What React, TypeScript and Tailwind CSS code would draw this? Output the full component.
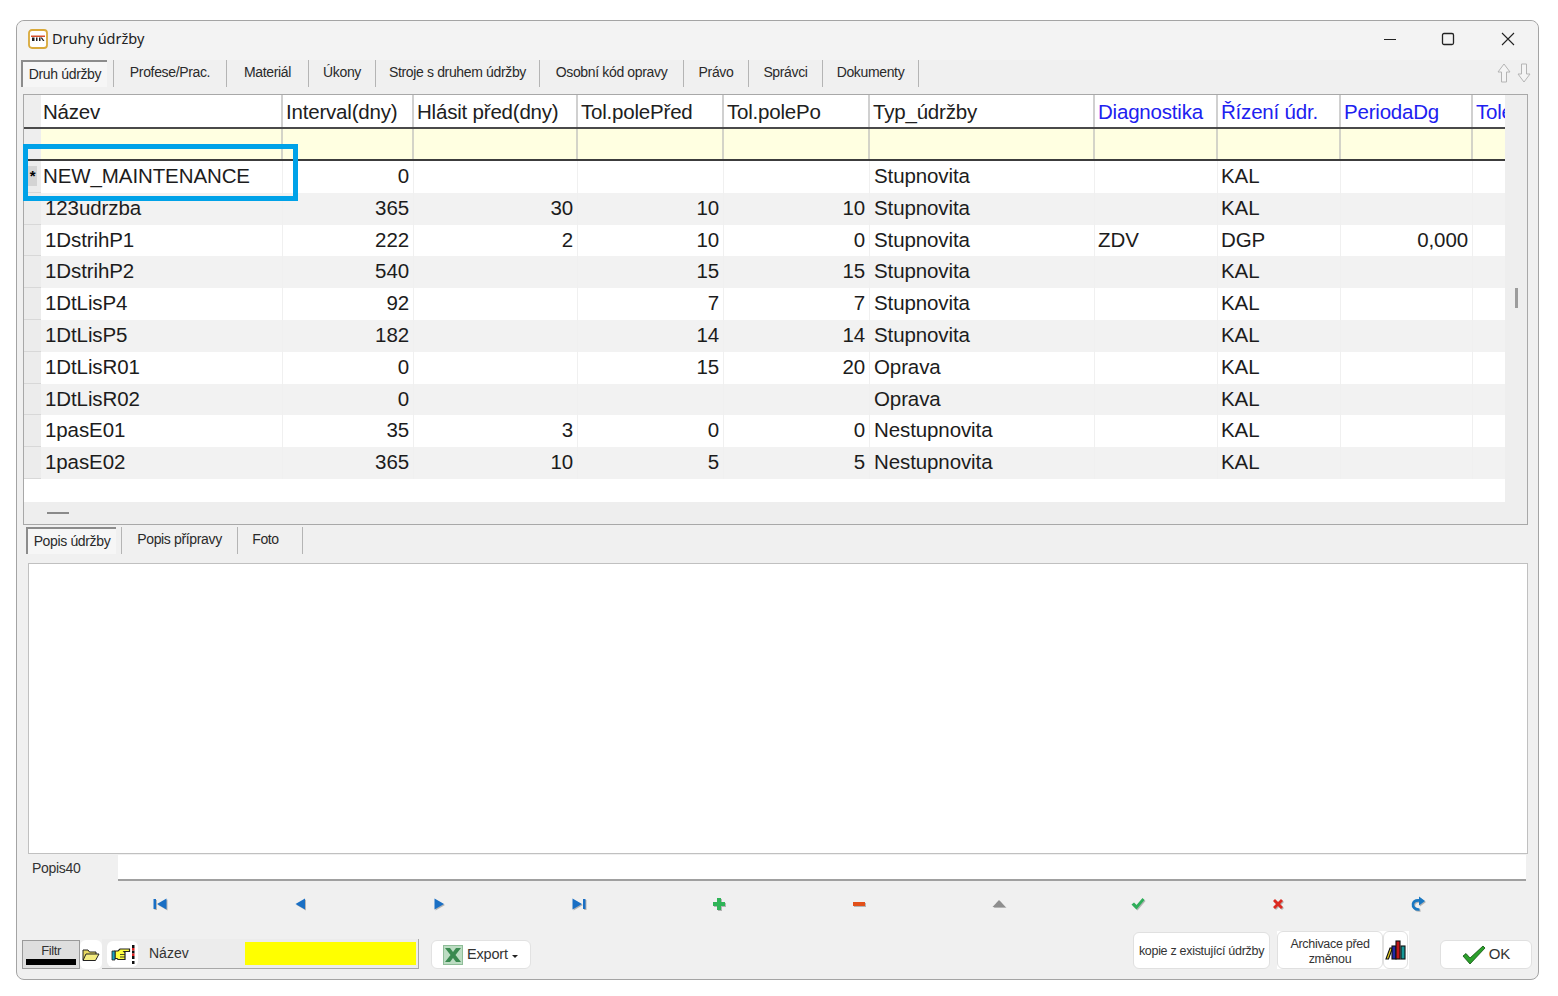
import type { ReactNode } from 'react';

const gridCols = 'grid grid-cols-[17px_242px_131px_164px_146px_146px_225px_123px_123px_132px_32px]';

const topTabs = [
  { label: 'Profese/Prac.', width: 'w-[113px]' },
  { label: 'Materiál', width: 'w-[82px]' },
  { label: 'Úkony', width: 'w-[67px]' },
  { label: 'Stroje s druhem údržby', width: 'w-[164px]' },
  { label: 'Osobní kód opravy', width: 'w-[144px]' },
  { label: 'Právo', width: 'w-[65px]' },
  { label: 'Správci', width: 'w-[74px]' },
  { label: 'Dokumenty', width: 'w-[96px]' },
];

const headers = [
  { label: 'Název', blue: false },
  { label: 'Interval(dny)', blue: false },
  { label: 'Hlásit před(dny)', blue: false },
  { label: 'Tol.polePřed', blue: false },
  { label: 'Tol.polePo', blue: false },
  { label: 'Typ_údržby', blue: false },
  { label: 'Diagnostika', blue: true },
  { label: 'Řízení údr.', blue: true },
  { label: 'PeriodaDg', blue: true },
  { label: 'Tolerance', blue: true },
];

const rows = [
  ['NEW_MAINTENANCE', '0', '', '', '', 'Stupnovita', '', 'KAL', ''],
  ['123udrzba', '365', '30', '10', '10', 'Stupnovita', '', 'KAL', ''],
  ['1DstrihP1', '222', '2', '10', '0', 'Stupnovita', 'ZDV', 'DGP', '0,000'],
  ['1DstrihP2', '540', '', '15', '15', 'Stupnovita', '', 'KAL', ''],
  ['1DtLisP4', '92', '', '7', '7', 'Stupnovita', '', 'KAL', ''],
  ['1DtLisP5', '182', '', '14', '14', 'Stupnovita', '', 'KAL', ''],
  ['1DtLisR01', '0', '', '15', '20', 'Oprava', '', 'KAL', ''],
  ['1DtLisR02', '0', '', '', '', 'Oprava', '', 'KAL', ''],
  ['1pasE01', '35', '3', '0', '0', 'Nestupnovita', '', 'KAL', ''],
  ['1pasE02', '365', '10', '5', '5', 'Nestupnovita', '', 'KAL', ''],
];

function Icon({ children, className = 'h-4 w-4 drop-shadow-[1px_1px_0.5px_rgba(0,0,0,0.25)]' }: { children: ReactNode; className?: string }) {
  return (
    <svg viewBox="0 0 16 16" className={className}>
      {children}
    </svg>
  );
}

const navIcons = [
  <Icon key="first"><path d="M1.500 3h2.500v10H1.500zM14.500 2.500v11L5 8z" fill="#1a6fc4" /></Icon>,
  <Icon key="prev"><path d="M13 2.500v11L3.500 8z" fill="#1a6fc4" /></Icon>,
  <Icon key="next"><path d="M3.500 2.500v11L13 8z" fill="#1a6fc4" /></Icon>,
  <Icon key="last"><path d="M1.500 2.500v11L11 8zM12 3h2.500v10H12z" fill="#1a6fc4" /></Icon>,
  <Icon key="add"><path d="M6 2h4v4h4v4h-4v4H6v-4H2V6h4z" fill="#2fb457" /></Icon>,
  <Icon key="del"><path d="M2 6h12v4H2z" fill="#e2501a" /></Icon>,
  <Icon key="edit"><path d="M8 4l6.500 7h-13z" fill="#8e8e8e" /></Icon>,
  <Icon key="post"><path d="M1.500 8.500l2.500-2 2.500 2.500L12.500 2l2 2-8 9.500z" fill="#2fae5a" /></Icon>,
  <Icon key="cancel"><path d="M3 5l2-2 3 3 3-3 2 2-3 3 3 3-2 2-3-3-3 3-2-2 3-3z" fill="#dc2a20" /></Icon>,
  <Icon key="refresh">
    <path d="M9.500 13.500C5 14 2.500 11 3 8C3.500 5 6 4 10 4.500" fill="none" stroke="#1a78c2" strokeWidth="2.600" />
    <path d="M9 0.500L15 5 9 9.500z" fill="#1a78c2" />
  </Icon>,
];

function Tab({ label, width, className = '' }: { label: string; width: string; className?: string }) {
  return (
    <div className={`flex h-full items-center justify-center border-r border-[#b4b4b4] pb-[2px] ${width} ${className}`}>
      <span className="tracking-[-0.35px]">{label}</span>
    </div>
  );
}

function ActiveTab({ label, width }: { label: string; width: string }) {
  return (
    <div className={`flex items-center justify-center border-t-2 border-l-2 border-[#8c8c8c] bg-[#f6f6f6] ${width}`}>
      <span className="tracking-[-0.35px]">{label}</span>
    </div>
  );
}

function GridHeader() {
  return (
    <>
      <div className={`${gridCols} h-[34px] border-b-2 border-[#4a4a4a]`}>
        <div className="bg-[#eeeeee]" />
        {headers.map((h, i) => (
          <div
            key={h.label}
            className={`overflow-hidden whitespace-nowrap border-r-2 border-[#d0d0d0] bg-white pt-[2px] leading-[30px] tracking-[-0.2px] last:border-r-0 ${
              h.blue ? 'text-[#2020f0]' : 'text-[#202020]'
            } ${i === 0 ? 'pl-[2px]' : 'pl-[3px]'}`}
          >
            {h.label}
          </div>
        ))}
      </div>
      <div className={`${gridCols} h-[32px] border-b-2 border-[#3c3c3c]`}>
        <div className="bg-[#eeeeee]" />
        {headers.map((h) => (
          <div key={h.label} className="border-r-2 border-[#d4d4c8] bg-[#ffffe1] last:border-r-0" />
        ))}
      </div>
    </>
  );
}

function GridRow({ row, index }: { row: string[]; index: number }) {
  const bg = index % 2 === 0 ? 'bg-white' : 'bg-[#f2f2f2]';
  const cell = `h-[31.800px] whitespace-nowrap border-r border-[#f0f0f0] leading-[30px] text-[#1c1c1c] ${bg}`;
  return (
    <div className={gridCols}>
      <div className="flex h-[31.800px] items-center justify-center border-b border-[#d8d8d8] bg-[#ececec]">
        {index === 0 && <span className="bg-[#d4d4d4] px-[2px] text-[15px] font-bold leading-[20px] text-black">*</span>}
      </div>
      <div className={`${cell} ${index === 0 ? 'pl-[2px]' : 'pl-[4px]'}`}>{row[0]}</div>
      <div className={`${cell} pr-[4px] text-right`}>{row[1]}</div>
      <div className={`${cell} pr-[4px] text-right`}>{row[2]}</div>
      <div className={`${cell} pr-[4px] text-right`}>{row[3]}</div>
      <div className={`${cell} pr-[4px] text-right`}>{row[4]}</div>
      <div className={`${cell} pl-[4px]`}>{row[5]}</div>
      <div className={`${cell} pl-[3px]`}>{row[6]}</div>
      <div className={`${cell} pl-[3px]`}>{row[7]}</div>
      <div className={`${cell} pr-[4px] text-right`}>{row[8]}</div>
      <div className={`${cell} border-r-0`} />
    </div>
  );
}

function AppLogo() {
  return (
    <svg viewBox="0 0 20 20" className="h-5 w-5">
      <rect x="1" y="1" width="18" height="18" rx="3" fill="#fff" stroke="#d9a93a" strokeWidth="1.800" />
      <path d="M3 6.500h14v1.500H3z" fill="#d9502a" />
      <path d="M4 8.500h2.500v3.500H4zM8 8.500h1.500v3.500H8zM11 8.500h1.500v3.500H11zM14 8.500l2.500 3.500H15l-2.500-3.500z" fill="#222" />
    </svg>
  );
}

function SortArrows() {
  return (
    <div className="flex items-center gap-[6px] pt-[3px]">
      <svg viewBox="0 0 14 20" className="h-5 w-[14px]">
        <path d="M7 1l6 8H9.500v10h-5V9H1z" fill="#f4f4f4" stroke="#b4b4b4" />
      </svg>
      <svg viewBox="0 0 14 20" className="h-5 w-[14px]">
        <path d="M7 19l6-8H9.500V1h-5v10H1z" fill="#f4f4f4" stroke="#b4b4b4" />
      </svg>
    </div>
  );
}

function ExcelIcon() {
  return (
    <svg viewBox="0 0 20 20" className="h-5 w-5">
      <rect x="0.500" y="0.500" width="19" height="19" fill="#bcdcc2" stroke="#8fbd98" />
      <path d="M2 3h5l3 4 3-4h5l-5.500 7 5.500 7h-5l-3-4-3 4H2l5.500-7z" fill="#3a8a50" />
    </svg>
  );
}

function HandIcon() {
  return (
    <svg viewBox="0 0 24 20" className="h-5 w-6">
      <path d="M4 7h3l2-2h9.500v2.500H13l1 1v7H7l-1-1H4z" fill="#ffff40" stroke="#222" strokeWidth="1.200" />
      <path d="M9 10.500h5M9 13h5" stroke="#222" strokeWidth="0.800" />
      <path d="M1 7h3v9H1z" fill="#18a0c0" stroke="#222" strokeWidth="0.800" />
      <path d="M21 1h2.500v3H21zM21 6.500h2.500v3H21zM21 12h2.500v3H21zM21 17h2.500v3H21z" fill="#111" />
      <path d="M21 4h2.500v2.500H21zM21 9.500h2.500V12H21z" fill="#e02020" />
    </svg>
  );
}

function FolderIcon() {
  return (
    <svg viewBox="0 0 18 14" className="h-[14px] w-[18px]">
      <path d="M1 12V2h5l1.500 2H14v2.500" fill="#e8d860" stroke="#222" />
      <path d="M1 12.500l3-6.500h13l-3.500 6.500z" fill="#f4ec80" stroke="#222" />
    </svg>
  );
}

function BooksIcon() {
  return (
    <svg viewBox="0 0 22 22" className="h-[22px] w-[22px]">
      <path d="M1 20l4-11h2.500L3.500 20z" fill="#e8d020" stroke="#111" strokeWidth="1.100" />
      <rect x="7" y="7" width="4" height="13" fill="#2028a8" stroke="#111" strokeWidth="1.100" />
      <rect x="11" y="2" width="4" height="18" fill="#c01818" stroke="#111" strokeWidth="1.100" />
      <rect x="16" y="7" width="4" height="13" fill="#189898" stroke="#111" strokeWidth="1.100" />
    </svg>
  );
}

export default function App() {
  return (
    <div className="h-[996px] w-[1558px] overflow-hidden bg-white pt-[20px] pl-[16px] font-['Liberation_Sans',Arial,sans-serif]">
      <div className="relative flex h-[960px] w-[1523px] flex-col rounded-lg border border-[#a4a4a4] bg-[#f0f0f0] text-[#222]">
        {/* title bar */}
        <div className="flex h-[39px] shrink-0 items-center rounded-t-lg bg-[#f3f3f3] pb-[3px] pl-[11px] font-['Noto_Sans',sans-serif] text-[14.500px] text-[#222]">
          <AppLogo />
          <span className="ml-[4px]">Druhy údržby</span>
          <div className="ml-auto flex items-center">
            <svg viewBox="0 0 14 14" className="mr-[44px] h-[14px] w-[14px]">
              <path d="M1 7.500h12" stroke="#222" strokeWidth="1" />
            </svg>
            <svg viewBox="0 0 14 14" className="mr-[46px] h-[14px] w-[14px]">
              <rect x="1.500" y="1.500" width="11" height="11" rx="1.500" fill="none" stroke="#222" strokeWidth="1.300" />
            </svg>
            <svg viewBox="0 0 14 14" className="mr-[23px] h-[14px] w-[14px]">
              <path d="M1 1l12 12M13 1L1 13" stroke="#222" strokeWidth="1.100" />
            </svg>
          </div>
        </div>

        {/* top tabs */}
        <div className="flex h-[27px] shrink-0 items-stretch pr-[7px] pl-[4px] text-[14px] text-[#2a2a2a]">
          <ActiveTab label="Druh údržby" width="w-[86px]" />
          <div className="w-[7px] border-r border-[#b4b4b4]" />
          {topTabs.map((t) => (
            <Tab key={t.label} label={t.label} width={t.width} />
          ))}
          <div className="ml-auto">
            <SortArrows />
          </div>
        </div>

        {/* data grid */}
        <div className="mt-[7px] ml-[6px] flex h-[431px] w-[1505px] shrink-0 border border-[#a8a8a8] bg-[#eeeeee] text-[20.500px] tracking-[-0.1px]">
          <div className="flex w-[1481px] flex-col">
            <GridHeader />
            {rows.map((row, i) => (
              <GridRow key={row[0]} row={row} index={i} />
            ))}
            <div className="h-[23px] bg-white" />
            <div className="flex flex-1 items-center pl-[23px]">
              <div className="h-[2px] w-[22px] bg-[#8a8a8a]" />
            </div>
          </div>
          <div className="flex-1 pt-[193px] pl-[10px]">
            <div className="h-[20px] w-[3px] bg-[#9c9c9c]" />
          </div>
        </div>

        {/* lower tabs */}
        <div className="mt-[2px] flex h-[27px] shrink-0 items-stretch pl-[9px] text-[14px] text-[#2a2a2a]">
          <ActiveTab label="Popis údržby" width="w-[90px]" />
          <div className="w-[6px] border-r border-[#b4b4b4]" />
          <Tab label="Popis přípravy" width="w-[116px]" />
          <Tab label="Foto" width="w-[65px]" className="pr-[9px]" />
        </div>

        {/* description */}
        <div className="mt-[9px] ml-[11px] h-[291px] w-[1500px] shrink-0 border border-[#c0c0c0] bg-white" />

        <div className="flex h-[27px] shrink-0 items-center text-[14px] tracking-[-0.3px] text-[#333]">
          <span className="w-[101px] pt-[2px] pl-[15px]">Popis40</span>
          <div className="h-[26px] w-[1408px] border-b-2 border-[#a0a0a0] bg-white" />
        </div>

        {/* navigator */}
        <div className="grid h-[50px] w-[1471px] shrink-0 grid-cols-10 pt-[15px] pl-[73px]">
          {navIcons.map((icon) => (
            <div key={icon.key} className="flex justify-center">
              {icon}
            </div>
          ))}
        </div>

        {/* bottom toolbar */}
        <div className="flex h-[38px] shrink-0 items-end pr-[6px] pl-[5px] text-[#333]">
          <div className="flex h-[29px] w-[58px] flex-col items-center border border-[#9a9a9a] bg-[#dedede] text-[13px] tracking-[-0.4px]">
            <span className="h-[18px] leading-[20px]">Filtr</span>
            <div className="h-[6px] w-[50px] bg-black" />
          </div>
          <div className="flex h-[29px] w-[22px] items-center justify-center rounded-md bg-white">
            <FolderIcon />
          </div>
          <div className="flex h-[30px] w-[317px] items-center border-r border-b border-[#a8a8a8] bg-[#ececec] pl-[5px]">
            <div className="flex h-[26px] w-[31px] items-center justify-center rounded-md bg-white">
              <HandIcon />
            </div>
            <span className="ml-[11px] w-[96px] text-[14px]">Název</span>
            <div className="h-[23px] w-[171px] bg-[#ffff00]" />
          </div>
          <div className="ml-[12px] flex h-[29px] w-[100px] items-center rounded-md border border-[#e2e2e2] bg-white pl-[11px] text-[14.500px] tracking-[-0.2px]">
            <ExcelIcon />
            <span className="ml-[4px]">Export</span>
            <div className="mt-[3px] ml-[4px] h-0 w-0 border-x-[3px] border-t-[3px] border-x-transparent border-t-[#222]" />
          </div>

          <div className="ml-auto flex h-[37px] w-[137px] items-center justify-center rounded-md border border-[#e0e0e0] bg-white pt-[2px] text-[12.500px] tracking-[-0.3px]">
            kopie z existující údržby
          </div>
          <div className="ml-[7px] flex h-[38px] w-[132px] bg-white">
            <div className="flex w-[106px] items-center justify-center rounded-md border border-[#e0e0e0] bg-white pt-[3px] text-center text-[12.500px] leading-[15px] tracking-[-0.3px]">
              Archivace před
              <br />
              změnou
            </div>
            <div className="flex w-[25px] items-center justify-center rounded-md border border-[#e0e0e0] bg-white">
              <BooksIcon />
            </div>
          </div>
          <div className="ml-[31px] flex h-[29px] w-[92px] items-center justify-center rounded-md border border-[#e0e0e0] bg-white text-[15px]">
            <svg viewBox="0 0 24 20" className="h-5 w-6">
              <path d="M1 11l3-2.500 4 4.500L21 1l2 2L8 19z" fill="#2ba02b" stroke="#0d500d" strokeWidth="0.800" />
            </svg>
            <span className="ml-[3px]">OK</span>
          </div>
        </div>

        {/* highlight drawn over the grid */}
        <div className="absolute top-[123px] left-[6px] h-[57px] w-[275px] border-[5px] border-[#00a2e8]" />
      </div>
    </div>
  );
}
